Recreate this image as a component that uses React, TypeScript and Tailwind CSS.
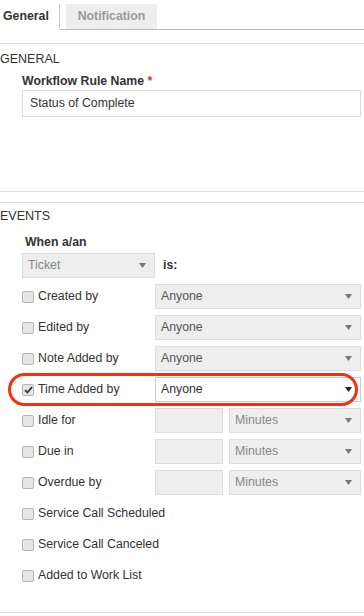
import React from 'react';

type Row = {
  label: string;
  kind: 'user' | 'duration' | 'none';
  checked?: boolean;
};

const rows: Row[] = [
  { label: 'Created by', kind: 'user' },
  { label: 'Edited by', kind: 'user' },
  { label: 'Note Added by', kind: 'user' },
  { label: 'Time Added by', kind: 'user', checked: true },
  { label: 'Idle for', kind: 'duration' },
  { label: 'Due in', kind: 'duration' },
  { label: 'Overdue by', kind: 'duration' },
  { label: 'Service Call Scheduled', kind: 'none' },
  { label: 'Service Call Canceled', kind: 'none' },
  { label: 'Added to Work List', kind: 'none' },
];

function Arrow({ dark }: { dark?: boolean }) {
  return (
    <svg width="7" height="5" viewBox="0 0 7 5" className="shrink-0">
      <path d="M0 0H7L3.5 5Z" fill={dark ? '#222' : '#777'} />
    </svg>
  );
}

function Select({
  value,
  active,
  muted,
  className = '',
}: {
  value: string;
  active?: boolean;
  muted?: boolean;
  className?: string;
}) {
  return (
    <div
      className={`h-[25px] flex items-center justify-between pl-[5px] pr-[8px] border ${
        active ? 'bg-white border-[#ccc] text-[#333]' : 'bg-[#eee] border-[#ddd]'
      } ${muted ? 'text-[#888]' : active ? '' : 'text-[#555]'} ${className}`}
    >
      <span>{value}</span>
      <Arrow dark={active} />
    </div>
  );
}

function Checkbox({ checked }: { checked?: boolean }) {
  return (
    <span className="w-[12px] h-[12px] shrink-0 rounded-[2px] border border-[#b5b5b5] bg-[#e6e6e6] flex items-center justify-center">
      {checked && (
        <svg width="9" height="8" viewBox="0 0 9 8">
          <path d="M1 4.2L3.4 6.5L8 1.2" stroke="#333" strokeWidth="1.8" fill="none" />
        </svg>
      )}
    </span>
  );
}

export default function App() {
  return (
    <div className="w-[364px] h-[616px] bg-white overflow-hidden font-['Liberation_Sans',Arial,sans-serif] text-[12.3px] text-[#333]">
      {/* tabs */}
      <div className="h-[30px] flex items-end border-b border-[#bbb]">
        <div className="w-[60px] h-[26px] -mb-px border-r border-[#ccc] border-b border-b-white bg-white pl-[3px] flex items-center font-bold text-[#333]">
          General
        </div>
        <div className="ml-[6px] w-[91px] h-[25px] bg-[#eee] flex items-center justify-center font-bold text-[#999]">
          Notification
        </div>
      </div>

      {/* general section */}
      <div className="mt-[13px] h-[149px] border-t border-b border-[#ddd] pt-[7px]">
        <div className="h-[16px] leading-[16px] text-[12.5px] uppercase">General</div>
        <div className="pl-[22px] pr-[3px]">
          <div className="mt-[7px] h-[15px] leading-[15px] font-bold">
            Workflow Rule Name <span className="text-[#d33]">*</span>
          </div>
          <div className="mt-[1px] h-[27px] border border-[#ddd] pl-[7px] flex items-center">
            Status of Complete
          </div>
        </div>
      </div>

      {/* events section */}
      <div className="mt-[10px] border-t border-b border-[#ddd] pt-[5px] pb-[24px]">
        <div className="h-[16px] leading-[16px] text-[12.5px] uppercase">Events</div>
        <div className="pl-[22px] pr-[3px]">
          <div className="mt-[11px] pl-[3px] h-[15px] leading-[15px] font-bold">When a/an</div>
          <div className="mt-[3px] flex items-center">
            <Select value="Ticket" muted className="w-[133px]" />
            <span className="ml-[8px] font-bold">is:</span>
          </div>
          <div className="mt-[6px] flex flex-col gap-[6px]">
            {rows.map((r) => (
              <div key={r.label} className="relative h-[25px] flex items-center">
                <div className="w-[133px] shrink-0 flex items-center gap-[4px] whitespace-nowrap">
                  <Checkbox checked={r.checked} />
                  <span>{r.label}</span>
                </div>
                {r.kind === 'user' && (
                  <Select value="Anyone" active={r.checked} className="flex-1" />
                )}
                {r.kind === 'duration' && (
                  <div className="flex-1 flex gap-[6px]">
                    <div className="w-[68px] h-[25px] bg-[#eee] border border-[#ddd]" />
                    <Select value="Minutes" muted className="flex-1" />
                  </div>
                )}
                {r.checked && (
                  <div className="pointer-events-none absolute left-[-14px] top-[-4px] w-[350px] h-[33px] rounded-[17px] border-[3px] border-[#f3300f]" />
                )}
              </div>
            ))}
          </div>
        </div>
      </div>
    </div>
  );
}
